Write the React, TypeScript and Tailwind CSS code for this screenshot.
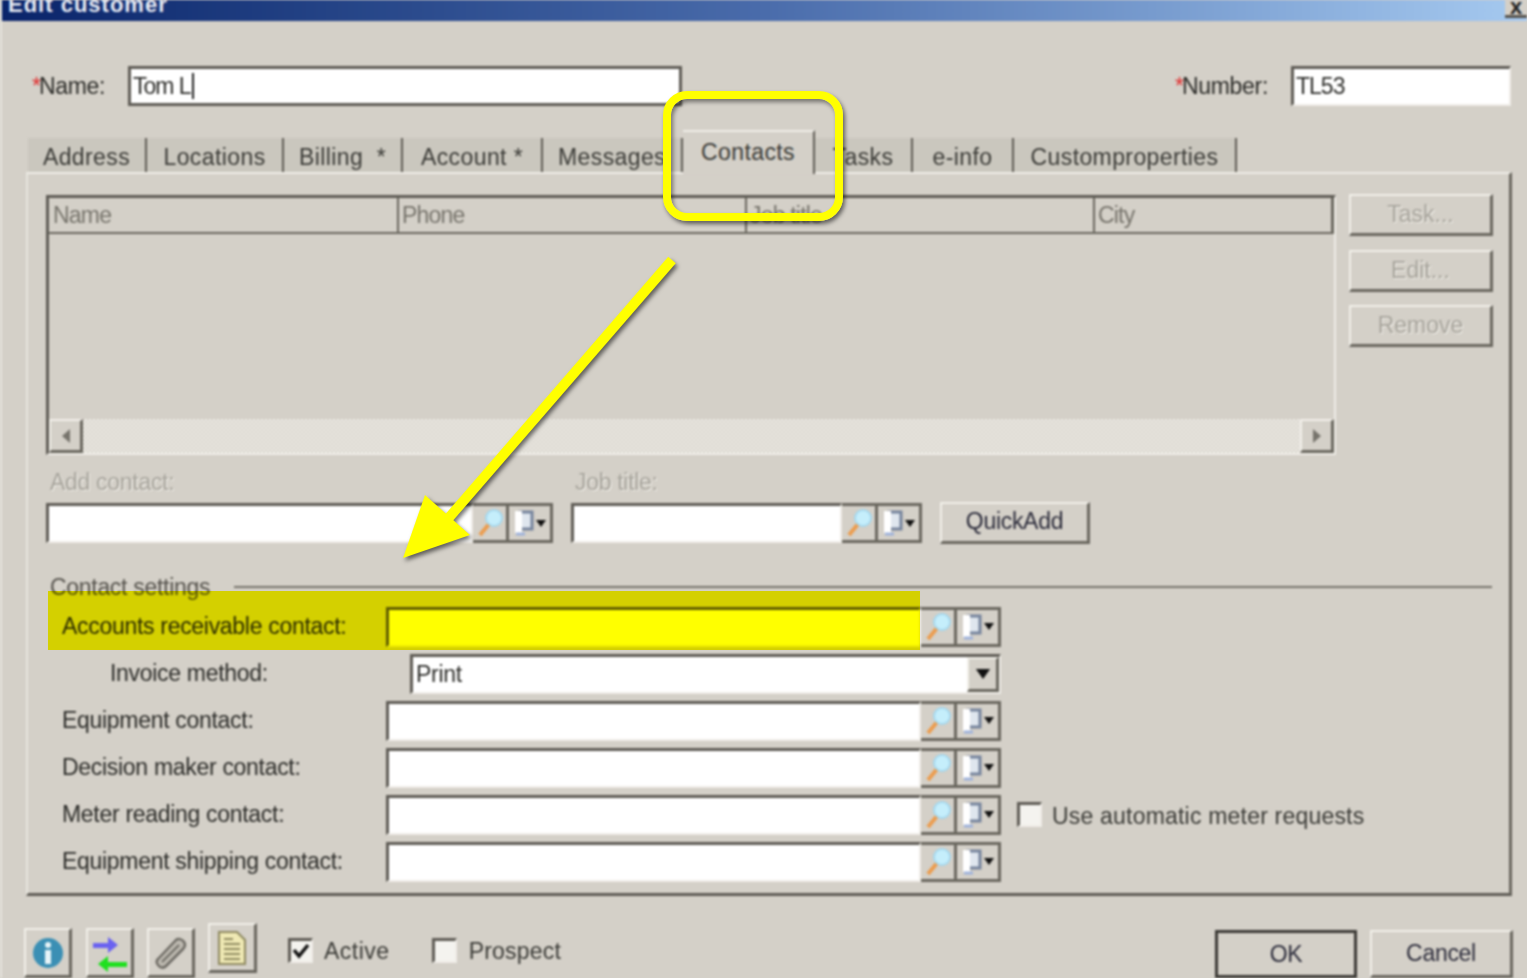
import React from "react";

const font = "font-['Liberation_Sans',Arial,sans-serif]";

const sunken =
  "border-2 border-t-[3px] border-l-[3px] border-t-[#5f5c55] border-l-[#5f5c55] border-r-[#efede7] border-b-[#efede7]";
const raised =
  "border-2 border-r-[3px] border-b-[3px] border-t-[#f2f0ea] border-l-[#f2f0ea] border-r-[#6a675f] border-b-[#6a675f]";

const disabledText = "text-[#a5a29a] [text-shadow:1px_1px_0_#f2f0ea]";

const Magnifier = () => (
  <svg width="30" height="30" viewBox="0 0 30 30">
    <line x1="5" y1="27" x2="14" y2="16" stroke="#eb9d50" strokeWidth="4" />
    <circle cx="19" cy="10" r="8" fill="#c5eefb" stroke="#a6d8ee" strokeWidth="2" />
  </svg>
);

const PersonDoc = () => (
  <svg width="22" height="30" viewBox="0 0 22 30">
    <rect x="7" y="4" width="12" height="17" fill="#dfe6ee" stroke="#76849c" strokeWidth="3" />
    <rect x="2" y="3" width="7" height="22" fill="#ffffff" />
    <line x1="3" y1="26" x2="12" y2="26" stroke="#9fb2da" strokeWidth="3" />
  </svg>
);

const Caret = ({ big }: { big?: boolean }) => (
  <svg width={big ? 18 : 12} height={big ? 10 : 7} viewBox="0 0 12 7">
    <polygon points="1,0 11,0 6,7" fill="#111" />
  </svg>
);

// the two small buttons that sit at the end of every lookup field
const LookupButtons = () => (
  <div className="flex h-full shrink-0 border-b-[3px] border-r-[3px] border-t-[3px] border-[#6a675f]">
    <div className="flex w-[36px] items-center justify-center border-r-[3px] border-[#6a675f]">
      <Magnifier />
    </div>
    <div className="flex w-[41px] items-center justify-center">
      <PersonDoc />
      <Caret />
    </div>
  </div>
);

const Label = ({ children, className = "" }: { children: React.ReactNode; className?: string }) => (
  <span className={`whitespace-nowrap text-[23px] tracking-[-0.3px] text-[#2b2b28] ${className}`}>{children}</span>
);

const DisabledLabel = ({ children }: { children: React.ReactNode }) => (
  <span className={`whitespace-nowrap text-[23px] tracking-[-0.3px] ${disabledText}`}>{children}</span>
);

const LookupRow = ({ label, extra }: { label: string; extra?: React.ReactNode }) => (
  <div className="flex h-[47px] items-center">
    <div className="w-[340px] shrink-0 pl-[16px]">
      <Label>{label}</Label>
    </div>
    <div className="flex h-[40px] w-[615px] shrink-0">
      <div className={`flex-1 bg-white ${sunken}`} />
      <LookupButtons />
    </div>
    {extra}
  </div>
);

const tabs = [
  { label: "Address", w: "w-[119px]" },
  { label: "Locations", w: "w-[137px]" },
  { label: "Billing  *", w: "w-[119px]" },
  { label: "Account *", w: "w-[140px]" },
  { label: "Messages", w: "w-[140px]" },
  { label: "Contacts", w: "w-[132px]", active: true },
  { label: "Tasks", w: "w-[98px]" },
  { label: "e-info", w: "w-[101px]" },
  { label: "Customproperties", w: "w-[223px]" },
];

const SideButton = ({ children }: { children: string }) => (
  <div className={`flex h-[42px] w-[144px] items-center justify-center text-[23px] ${disabledText} ${raised}`}>
    {children}
  </div>
);

const IconButton = ({ children, className = "" }: { children: React.ReactNode; className?: string }) => (
  <div className={`flex h-[50px] w-[48px] items-center justify-center ${raised} ${className}`}>{children}</div>
);

const Check = ({ checked }: { checked?: boolean }) => (
  <div className={`flex h-[25px] w-[25px] items-center justify-center bg-[#f4f3ef] ${sunken}`}>
    {checked && (
      <svg width="18" height="16" viewBox="0 0 18 16">
        <path d="M2 7 L7 13 L16 2" fill="none" stroke="#111" strokeWidth="3.5" />
      </svg>
    )}
  </div>
);

export default function App() {
  return (
    <div className={`relative h-[978px] w-[1527px] overflow-hidden bg-[#d4d0c8] ${font}`}>
      <div className="h-full border-l-2 border-[#e6e4dd] blur-[0.8px]">
        {/* title bar */}
        <div className="flex h-[21px] items-start justify-between overflow-hidden bg-gradient-to-r from-[#0a246a] via-[#4a6cab] to-[#a6caf0] pl-[6px]">
          <span className="-mt-[8px] text-[22px] font-bold leading-[26px] tracking-[1px] text-[#e8ecf4]">Edit customer</span>
          <div className="flex h-[18px] w-[22px] justify-center border-b-[3px] border-[#55524c] bg-[#d4d0c8] text-[22px] font-bold leading-[14px] text-[#222]">x</div>
        </div>

        {/* name / number */}
        <div className="mt-[45px] flex h-[40px] items-center pl-[30px]">
          <div className="w-[96px] shrink-0">
            <span className="text-[23px] text-[#e03030]">*</span>
            <Label className="-ml-[2px]">Name:</Label>
          </div>
          <div className="flex h-[40px] w-[554px] items-center border-[3px] border-[#5f5c55] bg-white pl-[2px]">
            <Label className="tracking-[-1px]">Tom L</Label>
            <span className="ml-[1px] h-[26px] w-[2px] bg-[#222]" />
          </div>
          <div className="ml-[493px] w-[116px] shrink-0">
            <span className="text-[23px] text-[#e03030]">*</span>
            <Label className="-ml-[2px]">Number:</Label>
          </div>
          <div className={`flex h-[40px] w-[220px] items-center bg-white pl-[2px] ${sunken}`}>
            <Label className="tracking-[-1px]">TL53</Label>
          </div>
        </div>

        {/* tabs */}
        <div className="mt-[32px] flex h-[34px] items-end pl-[26px]">
          {tabs.map((t) => (
            <div
              key={t.label}
              className={`flex items-center justify-center whitespace-pre border-r-2 border-[#5f5c55] pt-[4px] text-[23px] tracking-[0.4px] text-[#3a3a36] ${t.w} ${
                t.active ? "relative z-10 -mb-[2px] h-[44px] border-t-2 border-t-[#efede7] bg-[#d4d0c8] pb-[6px]" : "h-[34px] bg-[#cac7be]"
              }`}
            >
              {t.label}
            </div>
          ))}
        </div>

        {/* tab panel */}
        <div className="ml-[24px] h-[724px] w-[1486px] border-2 border-b-[3px] border-r-[3px] border-t-[#efede7] border-l-[#e8e6df] border-r-[#6a675f] border-b-[#5f5c55] pl-[18px] pt-[21px]">
          <div className="flex">
            <div className={`flex h-[260px] w-[1290px] flex-col ${sunken}`}>
              <div className="flex h-[36px] border-b-2 border-r-[3px] border-[#6a675f] text-[23px] tracking-[-0.8px] text-[#77746c]">
                <div className="flex w-[350px] items-center border-r-2 border-[#6a675f] pl-[4px]">Name</div>
                <div className="flex w-[348px] items-center border-r-2 border-[#6a675f] pl-[3px]">Phone</div>
                <div className="flex w-[348px] items-center border-r-2 border-[#6a675f] pl-[3px]">Job title</div>
                <div className="flex flex-1 items-center pl-[3px]">City</div>
              </div>
              <div className="flex-1" />
              <div className="flex h-[34px] justify-between bg-[repeating-conic-gradient(#d4d0c8_0_25%,#f2f0ea_0_50%)] bg-[length:4px_4px]">
                <div className={`flex w-[34px] items-center justify-center bg-[#d4d0c8] ${raised}`}>
                  <svg width="8" height="14" viewBox="0 0 8 14"><polygon points="8,0 8,14 0,7" fill="#77746c" /></svg>
                </div>
                <div className={`flex w-[34px] items-center justify-center bg-[#d4d0c8] ${raised}`}>
                  <svg width="8" height="14" viewBox="0 0 8 14"><polygon points="0,0 0,14 8,7" fill="#77746c" /></svg>
                </div>
              </div>
            </div>
            <div className="-mt-[1px] ml-[13px] flex flex-col gap-[14px]">
              <SideButton>Task...</SideButton>
              <SideButton>Edit...</SideButton>
              <div className="-mt-[1px]">
                <SideButton>Remove</SideButton>
              </div>
            </div>
          </div>

          {/* add contact */}
          <div className="mt-[13px] flex h-[28px] items-center pl-[4px]">
            <div className="w-[525px]"><DisabledLabel>Add contact:</DisabledLabel></div>
            <DisabledLabel>Job title:</DisabledLabel>
          </div>
          <div className="mt-[6px] flex h-[42px] items-center">
            <div className="flex h-[40px] w-[507px]">
              <div className={`flex-1 bg-white ${sunken}`} />
              <LookupButtons />
            </div>
            <div className="ml-[18px] flex h-[40px] w-[351px]">
              <div className={`flex-1 bg-white ${sunken}`} />
              <LookupButtons />
            </div>
            <div className={`ml-[18px] flex h-[42px] w-[150px] items-center justify-center pb-[2px] text-[23px] tracking-[-0.3px] text-[#2b2b3a] ${raised}`}>QuickAdd</div>
          </div>

          {/* contact settings */}
          <div className="mt-[29px] flex h-[28px] items-center pl-[4px]">
            <Label className="text-[#55524c]">Contact settings</Label>
            <div className="ml-[24px] h-[2px] w-[1258px] bg-[#77746c]" />
          </div>

          <div className="mt-[2px]">
            <LookupRow label="Accounts receivable contact:" />
            <div className="flex h-[47px] items-center">
              <div className="w-[364px] shrink-0 pl-[64px]">
                <Label>Invoice method:</Label>
              </div>
              <div className={`flex h-[40px] w-[591px] items-center bg-white pl-[3px] ${sunken}`}>
                <Label className="flex-1">Print</Label>
                <div className={`flex h-full w-[32px] items-center justify-center bg-[#d4d0c8] ${raised}`}>
                  <Caret big />
                </div>
              </div>
            </div>
            <LookupRow label="Equipment contact:" />
            <LookupRow label="Decision maker contact:" />
            <LookupRow
              label="Meter reading contact:"
              extra={
                <div className="ml-[16px] flex items-center gap-[10px]">
                  <Check />
                  <span className="mt-[4px] text-[23px] tracking-[0.2px] text-[#3a3a36]">Use automatic meter requests</span>
                </div>
              }
            />
            <LookupRow label="Equipment shipping contact:" />
          </div>
        </div>

        {/* footer */}
        <div className="mt-[32px] flex items-start pl-[22px]">
          <IconButton>
            <svg width="32" height="36" viewBox="0 0 32 36">
              <circle cx="16" cy="18" r="15" fill="#3b8fb4" />
              <circle cx="16" cy="10" r="3" fill="#e8f4f8" />
              <rect x="13" y="15" width="6" height="14" fill="#e8f4f8" />
            </svg>
          </IconButton>
          <IconButton className="ml-[14px]">
            <svg width="36" height="40" viewBox="0 0 36 40">
              <path d="M1 10 H16 V4 L26 12 L16 20 V15 H1 Z" fill="#6a62f0" />
              <path d="M35 29 H16 V23 L6 31 L16 39 V34 H35 Z" fill="#1fe01f" />
            </svg>
          </IconButton>
          <IconButton className="ml-[13px]">
            <svg width="34" height="34" viewBox="0 0 34 34" fill="none">
              <path d="M6 31 C2 28 2 25 4 23 L22 4 C24 2 28 3 30 6 C32 9 31 11 29 13 L12 30 C10 32 8 32 6 31 Z" fill="#bdb9b0" stroke="#6f6c65" strokeWidth="2.5" />
              <path d="M8 26 L25 9" stroke="#6f6c65" strokeWidth="2" />
            </svg>
          </IconButton>
          <IconButton className="-mt-[5px] ml-[13px] w-[49px]">
            <svg width="30" height="36" viewBox="0 0 30 36">
              <path d="M2 2 H20 L28 10 V34 H2 Z" fill="#efe9b4" stroke="#8f8a60" strokeWidth="2" />
              <path d="M7 14 H23 M7 19 H23 M7 24 H23 M7 29 H23 M7 9 H16" stroke="#8f8a60" strokeWidth="2" />
            </svg>
          </IconButton>
          <div className="ml-[31px] mt-[4px] flex items-center gap-[11px]">
            <Check checked />
            <span className="mt-[2px] text-[23px] tracking-[0.5px] text-[#3a3a36]">Active</span>
          </div>
          <div className="ml-[42px] mt-[4px] flex items-center gap-[12px]">
            <Check />
            <span className="mt-[2px] text-[23px] tracking-[0.2px] text-[#3a3a36]">Prospect</span>
          </div>
          <div className="ml-auto flex pr-[14px] pt-[2px]">
            <div className="flex h-[48px] w-[142px] items-center justify-center border-[3px] border-[#3c3a36] text-[23px] tracking-[-0.3px] text-[#2b2b3a]">OK</div>
            <div className={`ml-[13px] flex h-[48px] w-[143px] items-center justify-center text-[23px] tracking-[-0.3px] text-[#2b2b3a] ${raised}`}>Cancel</div>
          </div>
        </div>
      </div>

      {/* annotations drawn on top of the screenshot */}
      <div className="absolute left-[48px] top-[591px] h-[59px] w-[872px] bg-[#ffff00] mix-blend-multiply" />
      <div className="absolute left-[663px] top-[91px] h-[130px] w-[180px] rounded-[24px] border-[8px] border-[#ffff00] shadow-[2px_3px_4px_rgba(0,0,0,0.55),inset_2px_3px_4px_rgba(0,0,0,0.45)]" />
      <svg className="absolute left-[395px] top-[250px] drop-shadow-[2px_3px_2px_rgba(0,0,0,0.55)]" width="290" height="320" viewBox="0 0 290 320">
        <line x1="277" y1="10" x2="45" y2="278" stroke="#ffff00" strokeWidth="10" />
        <polygon points="8,308 30,245 75,285" fill="#ffff00" />
      </svg>
    </div>
  );
}
